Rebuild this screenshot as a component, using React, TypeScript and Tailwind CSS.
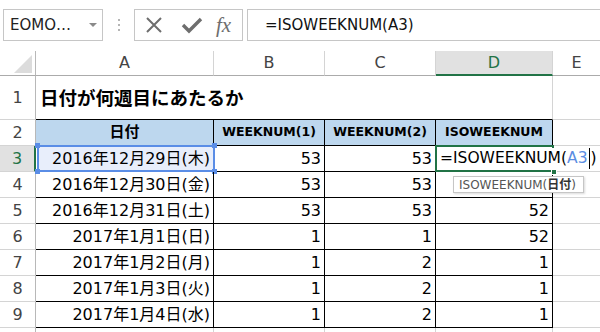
import { Fragment } from 'react'

const font = "font-['DejaVu_Sans','Noto_Sans_CJK_JP',sans-serif]"

const rows = [
  { n: 3, date: '2016年12月29日(木)', b: '53', c: '53', d: '' },
  { n: 4, date: '2016年12月30日(金)', b: '53', c: '53', d: '' },
  { n: 5, date: '2016年12月31日(土)', b: '53', c: '53', d: '52' },
  { n: 6, date: '2017年1月1日(日)', b: '1', c: '1', d: '52' },
  { n: 7, date: '2017年1月2日(月)', b: '1', c: '2', d: '1' },
  { n: 8, date: '2017年1月3日(火)', b: '1', c: '2', d: '1' },
  { n: 9, date: '2017年1月4日(水)', b: '1', c: '2', d: '1' },
]

function RowHead({ n, active }: { n?: number; active?: boolean }) {
  return (
    <div
      className={
        active
          ? 'w-[36px] shrink-0 flex items-center justify-center bg-[#e1e1e1] border-r-2 border-r-[#217346] border-b border-b-[#d4d4d4] text-[16px] font-normal text-[#217346]'
          : 'w-[36px] shrink-0 flex items-center justify-center border-r border-r-[#b8b8b8] border-b border-b-[#d4d4d4] text-[16px] font-normal text-[#444]'
      }
    >
      {n}
    </div>
  )
}

function Handle({ pos }: { pos: string }) {
  return <div className={`absolute w-[5px] h-[5px] bg-[#5a8de6] ${pos}`} />
}

export default function App() {
  return (
    <div className={`relative w-[600px] h-[332px] overflow-hidden bg-white text-black ${font}`}>
      {/* formula bar */}
      <div className="flex h-[32px] mt-[9px]">
        <div className="ml-[3px] w-[100px] border border-[#c6c6c6] flex items-center justify-between pl-[6px] pr-[5px]">
          <span className="text-[15px] text-[#222]">EOMO…</span>
          <svg width="8" height="5" viewBox="0 0 8 5">
            <polygon points="0,0 8,0 4,4" fill="#8a8a8a" />
          </svg>
        </div>
        <div className="w-[31px] flex flex-col items-center justify-center gap-[3px]">
          <span className="w-[2px] h-[2px] bg-[#b5b5b5]" />
          <span className="w-[2px] h-[2px] bg-[#b5b5b5]" />
          <span className="w-[2px] h-[2px] bg-[#b5b5b5]" />
        </div>
        <div className="w-[109px] border border-[#c6c6c6] flex items-center pl-[9px]">
          <svg width="18" height="18" viewBox="0 0 18 18" className="ml-[1px]">
            <path d="M2 2 L16 16 M16 2 L2 16" stroke="#6e6e6e" strokeWidth="2" />
          </svg>
          <svg width="22" height="18" viewBox="0 0 22 18" className="ml-[18px]">
            <path d="M2 9 L8 15 L20 3" stroke="#6e6e6e" strokeWidth="3.4" fill="none" />
          </svg>
          <span className="ml-[13px] font-['Liberation_Serif',serif] italic text-[21px] text-[#6e6e6e] leading-none">
            fx
          </span>
        </div>
        <div className="ml-[4px] flex-1 border border-r-0 border-[#c6c6c6] flex items-center pl-[17px]">
          <span className="text-[15px] text-[#111]">=ISOWEEKNUM(A3)</span>
        </div>
      </div>

      {/* sheet */}
      <div className="mt-[10px]">
        {/* column headers */}
        <div className="flex h-[25px] text-[16px] text-[#444]">
          <div className="w-[36px] shrink-0 relative border-r border-r-[#b8b8b8] border-b border-b-[#ababab]">
            <svg width="20" height="20" viewBox="0 0 20 20" className="absolute right-[2px] bottom-[1px]">
              <polygon points="19,1 19,19 1,19" fill="#dcdcdc" />
            </svg>
          </div>
          <div className="w-[178px] shrink-0 flex items-center justify-center border-r border-r-[#d4d4d4] border-b border-b-[#ababab]">A</div>
          <div className="w-[111px] shrink-0 flex items-center justify-center border-r border-r-[#d4d4d4] border-b border-b-[#ababab]">B</div>
          <div className="w-[111px] shrink-0 flex items-center justify-center border-r border-r-[#d4d4d4] border-b border-b-[#ababab]">C</div>
          <div className="w-[117px] shrink-0 flex items-center justify-center bg-[#e1e1e1] text-[#217346] border-r border-r-[#d4d4d4] border-b-2 border-b-[#217346]">D</div>
          <div className="flex-1 flex items-center justify-center border-b border-b-[#ababab]">E</div>
        </div>

        {/* row 1 */}
        <div className="flex h-[44px]">
          <RowHead n={1} />
          <div className="w-[517px] shrink-0 flex items-center pl-[4px] pt-[2px] border-r border-r-[#d4d4d4] border-b border-b-black text-[18.5px] font-bold">
            日付が何週目にあたるか
          </div>
          <div className="flex-1 border-b border-b-[#d4d4d4]" />
        </div>

        {/* row 2 */}
        <div className="flex h-[26px] text-[12.5px] font-bold">
          <RowHead n={2} />
          <div className="w-[178px] shrink-0 flex items-center justify-center bg-[#bdd7ee] border-r border-b border-black text-[15px]">日付</div>
          <div className="w-[111px] shrink-0 flex items-center justify-center bg-[#bdd7ee] border-r border-b border-black">WEEKNUM(1)</div>
          <div className="w-[111px] shrink-0 flex items-center justify-center bg-[#bdd7ee] border-r border-b border-black">WEEKNUM(2)</div>
          <div className="w-[117px] shrink-0 flex items-center justify-center bg-[#bdd7ee] border-r border-b border-black">ISOWEEKNUM</div>
          <div className="flex-1 border-b border-b-[#d4d4d4]" />
        </div>

        {rows.map((r) => {
          const first = r.n === 3
          return (
            <div key={r.n} className="flex h-[26px] text-[16px]">
              <RowHead n={r.n} active={first} />
              <div className="relative w-[178px] shrink-0 flex items-center justify-end pr-[3px] border-r border-b border-black">
                {first && (
                  <Fragment>
                    <div className="absolute top-[-1px] left-[1px] right-[-2px] bottom-[-1px] border-2 border-[#5a8de6] bg-[#e8eefb]" />
                    <Handle pos="top-[-3px] left-[-1px]" />
                    <Handle pos="top-[-3px] right-[-4px]" />
                    <Handle pos="bottom-[-3px] left-[-1px]" />
                    <Handle pos="bottom-[-3px] right-[-4px]" />
                  </Fragment>
                )}
                <span className="relative">{r.date}</span>
              </div>
              <div className="w-[111px] shrink-0 flex items-center justify-end pr-[3px] border-r border-b border-black">{r.b}</div>
              <div className="w-[111px] shrink-0 flex items-center justify-end pr-[3px] border-r border-b border-black">{r.c}</div>
              <div className="relative w-[117px] shrink-0 flex items-center justify-end pr-[3px] border-r border-b border-black">
                {r.d}
                {first && (
                  <Fragment>
                    <div className="absolute z-10 top-[-1px] left-[-1px] right-[-2px] bottom-[-1px] border-2 border-[#217346]" />
                    <div className="absolute z-20 top-[2px] bottom-[2px] left-[2px] flex items-center bg-white pl-[2px] pr-[3px] whitespace-nowrap text-[15.5px]">
                      =ISOWEEKNUM(<span className="text-[#5b8de2]">A3</span>
                      <span className="w-px h-[21px] bg-black mx-[1px]" />)
                    </div>
                    <div className="absolute z-20 right-[-5px] bottom-[-4px] w-[6px] h-[6px] bg-[#217346] border border-white" />
                    <div className="absolute z-30 top-[30px] left-[17px] w-[131px] h-[17px] border border-[#c6c6c6] bg-white shadow-[1px_1px_2px_rgba(0,0,0,0.15)] flex items-center pl-[5px] text-[12px] text-[#555] whitespace-nowrap">
                      ISOWEEKNUM(<span className="font-bold text-[#333]">日付</span>)
                    </div>
                  </Fragment>
                )}
              </div>
              <div className="flex-1 border-b border-b-[#d4d4d4]" />
            </div>
          )
        })}

        {/* row 10 (partial) */}
        <div className="flex h-[26px]">
          <RowHead />
          <div className="w-[178px] shrink-0 border-r border-r-[#d4d4d4]" />
          <div className="w-[111px] shrink-0 border-r border-r-[#d4d4d4]" />
          <div className="w-[111px] shrink-0 border-r border-r-[#d4d4d4]" />
          <div className="w-[117px] shrink-0 border-r border-r-[#d4d4d4]" />
          <div className="flex-1" />
        </div>
      </div>
    </div>
  )
}
